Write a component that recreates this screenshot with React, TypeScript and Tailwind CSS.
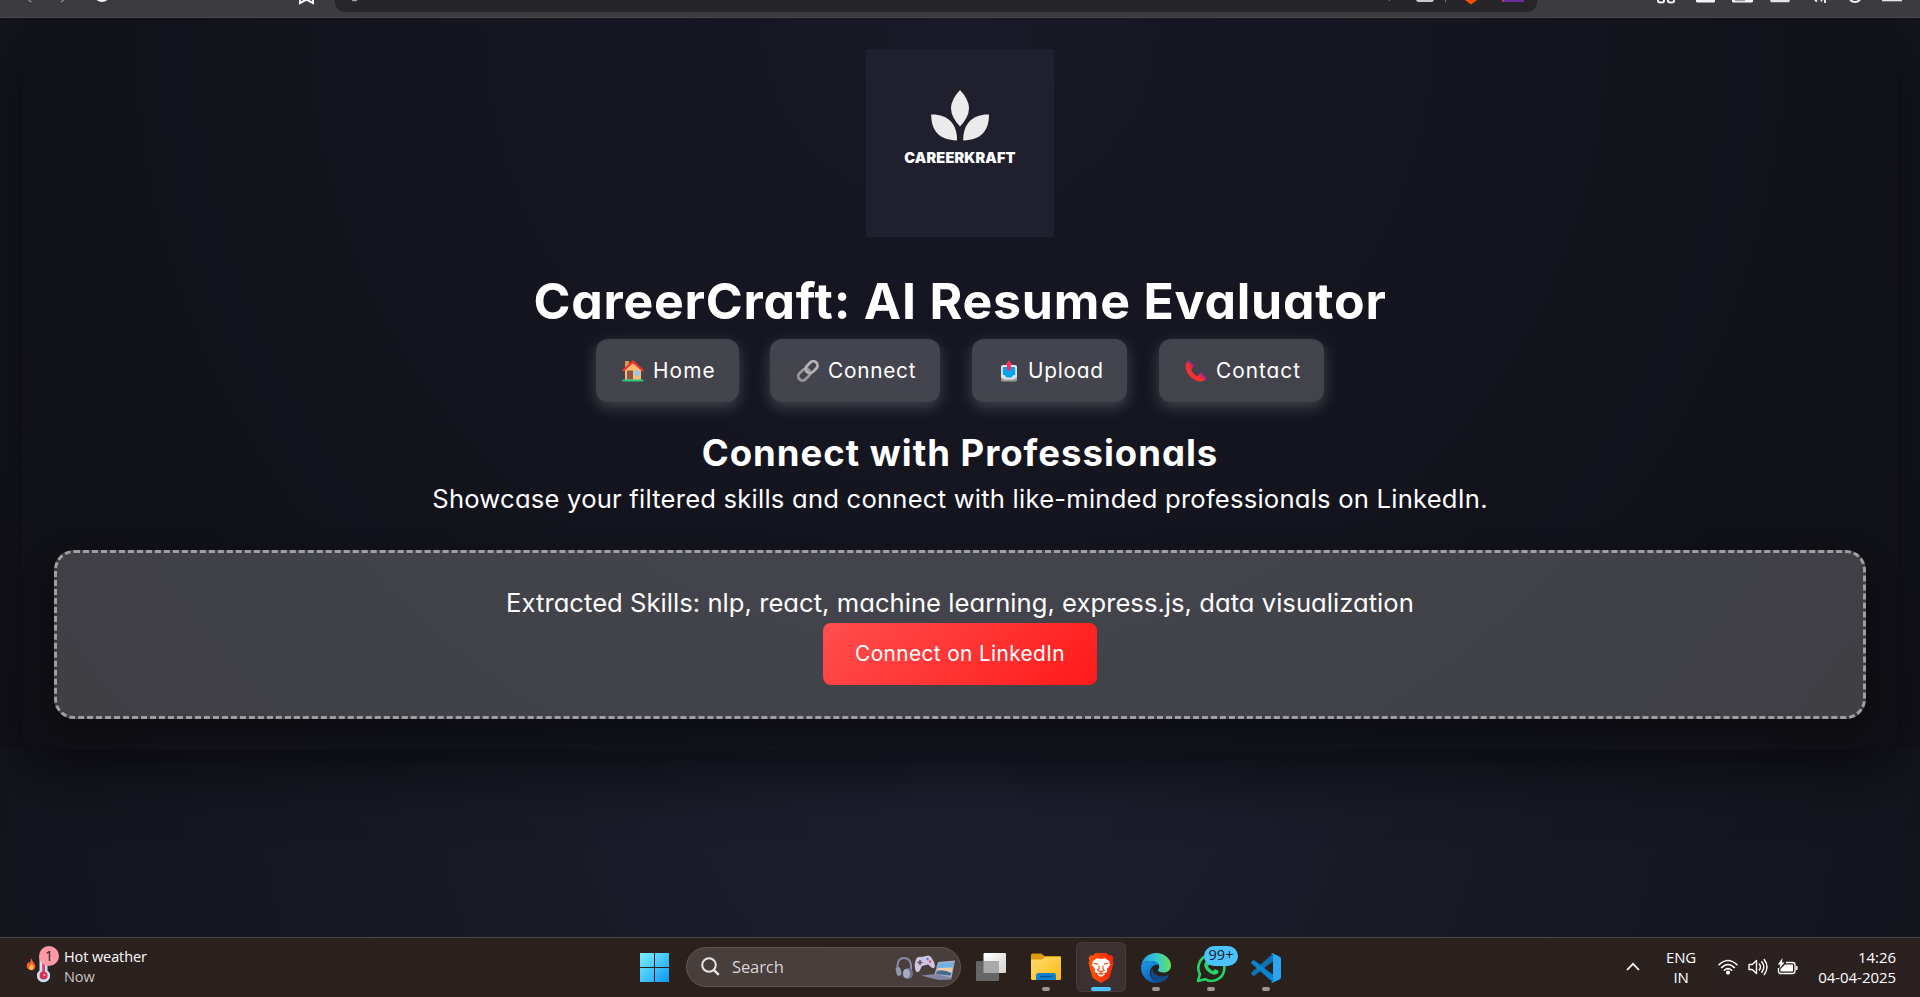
import React from "react";

const HomeIcon = () => (
  <svg width="22" height="22" viewBox="0 0 22 22">
    <path d="M3 1h4v7H3z" fill="#d99a52" />
    <path d="M3 9 11 3l8 6v11H3z" fill="#f3bd76" />
    <path d="M0.8 11 11 1.6 21.2 11" fill="none" stroke="#f8312f" strokeWidth="2.2" />
    <rect x="5" y="10.5" width="6" height="9" fill="#8d5744" />
    <rect x="12.6" y="10.8" width="4.8" height="4.6" fill="#83cbff" />
    <rect x="0.3" y="19.6" width="21.4" height="1.8" rx="0.9" fill="#26c97c" />
  </svg>
);

const LinkIcon = () => (
  <svg width="22" height="22" viewBox="0 0 22 22" fill="none" strokeWidth="2.8">
    <rect x="-6.6" y="-4.2" width="13.2" height="8.4" rx="4.2" transform="translate(7.2 14.6) rotate(-45)" stroke="#979797" />
    <rect x="-6.6" y="-4.2" width="13.2" height="8.4" rx="4.2" transform="translate(14.6 7.2) rotate(-45)" stroke="#b5b5b5" />
  </svg>
);

const OutboxIcon = () => (
  <svg width="18" height="22" viewBox="0 0 18 22">
    <path d="M1 17h16v3a1.5 1.5 0 0 1-1.5 1.5h-13A1.5 1.5 0 0 1 1 20z" fill="#9b9b9b" />
    <path d="M3 5h12a2 2 0 0 1 2 2v10.5l-4 2H5l-4-2V7a2 2 0 0 1 2-2z" fill="#e3e3e3" />
    <path d="M4 7h10q1.2 0 1.2 1.2V15h-1.600L11.500 17.400h-5L4.400 15H2.800V8.200q0-1.200 1.200-1.200z" fill="#00a6ed" />
    <path d="M9 0.300 12.600 5H11v5.500H7V5H5.400z" fill="#f92f60" />
  </svg>
);

const PhoneIcon = () => (
  <svg width="22" height="22" viewBox="0 0 22 22">
    <path d="M3.500 0.400 9 6 6.800 8.200 1.500 2.500z" fill="#c4237c" />
    <path d="M15.800 12.600 21.600 18.400 19.600 20.500 13.500 14.800z" fill="#c4237c" />
    <path d="M1.700 2 7.200 7.600 6 9.600q1.600 4.200 6.200 6.600l2-1.400 5.600 5.400q-2.300 1.800-5.800 1.300C6.500 20 0 12 0.600 5.200Q0.800 3.200 1.700 2z" fill="#f8312f" />
  </svg>
);

const NAV = [
  { label: "Home", icon: <HomeIcon />, box: "w-[143px] gap-[9px] pl-[26px]", text: "tracking-[1.1px]" },
  { label: "Connect", icon: <LinkIcon />, box: "-ml-px w-[170px] gap-[9px] pl-[27px]", text: "tracking-[0.75px]" },
  { label: "Upload", icon: <OutboxIcon />, box: "w-[155px] gap-[10px] pl-[28px]", text: "tracking-[0.75px]" },
  { label: "Contact", icon: <PhoneIcon />, box: "w-[165px] gap-[9px] pl-[26px]", text: "tracking-[1px]" },
];

const BrowserBar = () => (
  <header className="flex h-[18px] shrink-0 items-start border-b border-[#47464b] bg-[#3c3b3f]">
    <div className="flex w-[335px] shrink-0">
      <svg width="335" height="6" viewBox="0 0 335 6" fill="none">
        <path d="M28.500 0l3 2M64 0l-3 2" stroke="#88878b" strokeWidth="1.500" />
        <path d="M96.500 0q5.500 3.800 11 0z" fill="#f4f4f5" />
        <path d="M300 0v3l6.500-3.500L313 3V0" stroke="#f4f4f5" strokeWidth="2" />
      </svg>
    </div>
    <div className="flex h-[12px] w-[1202px] shrink-0 justify-between rounded-b-[10px] bg-[#26252a] pl-[16px] pr-[12px]">
      <svg width="8" height="3" viewBox="0 0 8 3"><path d="M0.500 0h6l-1 1.300h-4z" fill="#a3a2a6" /></svg>
      <svg width="140" height="6" viewBox="0 0 140 6">
        <path d="M4 0h1v1H4z" fill="#77767a" />
        <path d="M31 0h18l-1.500 2h-15z" fill="#c9c9cc" />
        <path d="M60 0h1v2h-1z" fill="#77767a" />
        <path d="M80 0h12l-6 4.500z" fill="#ff5000" />
        <path d="M117 0h22v2h-22z" fill="#6b2f9c" />
        <path d="M117 0h2v1.500h-2z" fill="#d93d52" />
      </svg>
    </div>
    <svg className="ml-[120px]" width="255" height="6" viewBox="0 0 255 6" fill="none">
      <path d="M1 0v1q0 1.500 3 1.500T7 1V0M11 0v1q0 1.500 3 1.500T17 1V0" stroke="#f4f4f5" strokeWidth="2" />
      <path d="M39 0h19v1.500L57 2.500H40l-1-1z" fill="#f4f4f5" />
      <path d="M75 0h21v1.500L95 2.500H76l-1-1z" fill="#f4f4f5" />
      <path d="M78 0h10v1.200H78z" fill="#9a999d" />
      <path d="M113 0h20l-1 2.200h-18z" fill="#e4e4e6" />
      <path d="M158 0l2 1.500M164.500 0v1.500M168 0v3" stroke="#f4f4f5" strokeWidth="1.800" />
      <path d="M193 0q5 4 10 0" stroke="#f4f4f5" strokeWidth="2" />
      <path d="M225 0h20v1.300h-20z" fill="#e4e4e6" />
    </svg>
  </header>
);

const Logo = () => (
  <div className="flex h-[188px] w-[188px] flex-col items-center bg-[#201f2e] pt-[41px]">
    <svg width="60" height="52" viewBox="0 0 60 52" fill="#ebebeb">
      <path d="M30 0Q39 9.500 39 18.300T30 36.500Q21 27 21 18.300T30 0z" />
      <path d="M1.200 24.600C16.500 24 27.400 33 27 50.400C9.500 50.500 1.200 41 1.200 24.600z" />
      <path d="M59 24.600C43.700 24 33 33 33.200 50.400C50.700 50.500 59 41 59 24.600z" />
    </svg>
    <div className="mt-[6px] h-[20px] whitespace-nowrap text-[14.5px] font-black leading-[20px] tracking-[0.15px] text-white">CAREERKRAFT</div>
  </div>
);

const Indicator = ({ active = false }: { active?: boolean }) => (
  <div className={active ? "h-[4px] w-[20px] rounded-full bg-[#4cc2ff]" : "h-[4px] w-[8px] rounded-full bg-[#9e9695]"} />
);

const WindowsIcon = () => (
  <svg className="mt-[2px]" width="29" height="29" viewBox="0 0 29 29">
    <defs>
      <linearGradient id="win" x1="0" y1="0" x2="1" y2="1" gradientUnits="objectBoundingBox">
        <stop offset="0" stopColor="#7defff" /><stop offset="0.500" stopColor="#45c5fb" /><stop offset="1" stopColor="#0d96f8" />
      </linearGradient>
    </defs>
    <path d="M0 0h14v14H0zM15 0h14v14H15zM0 15h14v14H0zM15 15h14v14H15z" fill="url(#win)" />
  </svg>
);

const SearchArt = () => (
  <svg className="mt-[2px]" width="60" height="28" viewBox="0 0 60 28" fill="none">
    <path d="M2.500 17V11Q3 4 9 4q6 0 7 7v5" stroke="#8d8ba3" strokeWidth="2" />
    <rect x="1" y="13" width="5" height="9" rx="2.500" fill="#9296ac" transform="rotate(-12 3 17)" />
    <ellipse cx="13" cy="19.500" rx="5" ry="5.500" fill="#6f7089" />
    <ellipse cx="11.500" cy="19.500" rx="3.500" ry="4.500" fill="#a7abc0" />
    <path d="M22 3.500q3-1 5-.5l4-1q3-1.500 5 1 3.500 4.500 4 9-.5 3.500-3.500 1.500L33 10.500l-6 1.500-2.500 5q-2.500 2.500-4-.5Q18.500 9 22 3.500z" fill="#cfc3df" />
    <path d="M22.500 8.500h5M25 6v5" stroke="#565269" strokeWidth="1.600" />
    <circle cx="32.500" cy="5" r="1.200" fill="#5a7fd0" /><circle cx="35" cy="7.500" r="1.200" fill="#c85b70" />
    <path d="M43 8l17-1.500L56.500 24 39 22z" fill="#a9aec6" />
    <path d="M44.500 9.500l14-1-3 13-14.500-1.500z" fill="#68b3e8" />
    <path d="M43.200 14l14.300-.5-1 5-14.500-1z" fill="#f2c9a8" />
    <path d="M42 17q7-2 14 2l-.5 2.500L41 20z" fill="#43698b" />
    <path d="M26 21.500l14-1.500 16.500 3.500-.5 2-12 .5z" fill="#8288a4" />
  </svg>
);

const TaskViewIcon = () => (
  <svg width="30" height="28" viewBox="0 0 30 28">
    <defs><linearGradient id="tv" x1="0" y1="0" x2="1" y2="1"><stop offset="0" stopColor="#fff" /><stop offset="1" stopColor="#d2d2d2" /></linearGradient></defs>
    <rect x="7.500" y="0" width="22.500" height="20" rx="1" fill="url(#tv)" />
    <rect x="0" y="8" width="23" height="20" rx="1" fill="#666" />
    <path d="M7.500 8H23v12H7.500z" fill="#a9a9a9" />
  </svg>
);

const FolderIcon = () => (
  <svg width="30" height="28" viewBox="0 0 30 28">
    <defs><linearGradient id="fo" x1="0" y1="0" x2="1" y2="1"><stop offset="0" stopColor="#ffdc6e" /><stop offset="1" stopColor="#fcb915" /></linearGradient></defs>
    <path d="M0 2q0-1.500 1.500-1.500h8q1 0 2 1L13.500 3H29q1 0 1 1v8H0z" fill="#dc9a08" />
    <path d="M0 6.500h10.500L14 4h14.500Q30 4 30 5.500v20q0 1.500-1.500 1.500h-27Q0 27 0 25.500z" fill="url(#fo)" />
    <path d="M5 27v-4.500Q5 20 7.500 20h15q2.500 0 2.500 2.500V27z" fill="#1080d0" />
    <path d="M9 23.500h12.500" stroke="#084f92" strokeWidth="1.200" />
  </svg>
);

const BraveIcon = () => (
  <svg width="26" height="30" viewBox="0 0 26 30">
    <defs><linearGradient id="br" x1="0" y1="0" x2="1" y2="0"><stop offset="0" stopColor="#ff5601" /><stop offset="1" stopColor="#f9240e" /></linearGradient></defs>
    <path d="M7.500 0h11L21 2.500l2.500-.3L25.600 5l-1 2.500 1 2.500-3.800 13.500q-.5 1.500-2 2.500L13 30l-6.800-4q-1.500-1-2-2.500L0.400 10l1-2.500-1-2.500 2.100-2.800 2.500.3z" fill="url(#br)" />
    <path d="M9 5.200l4 .8 4-.8 4.500 3-.3 2 1.300 1.300-3.500 4.500.2 3-3.200 1.500.8 1L13 24l-3.800-2.500.8-1-3.200-1.500.2-3-3.500-4.500 1.300-1.300-.3-2z" fill="#fff" />
    <path d="M5.800 10.200l4.200.9M20.200 10.200l-4.200.9M10.800 12.500l.4 2.500-1.500 2.200 3.300 1.600 3.300-1.600-1.500-2.200.4-2.500" fill="none" stroke="#fb4210" strokeWidth="1.100" />
    <path d="M10 20.500l3-1 3 1-3 1.500z" fill="#fb4210" />
  </svg>
);

const EdgeIcon = () => (
  <svg width="30" height="30" viewBox="0 0 30 30">
    <defs>
      <linearGradient id="e1" x1="0" y1="0.500" x2="1" y2="0.400"><stop offset="0" stopColor="#1f9be8" /><stop offset="0.500" stopColor="#33c5d8" /><stop offset="1" stopColor="#67e651" /></linearGradient>
      <linearGradient id="e2" x1="0" y1="0" x2="0.600" y2="1"><stop offset="0" stopColor="#1aa0ea" /><stop offset="1" stopColor="#0c5cb8" /></linearGradient>
    </defs>
    <path d="M0.200 13C1.500 5 7.500 0 15 0c8.500 0 15 6 15 12.500 0 4.500-3.500 7-7.500 7-3.500 0-5.500-1.200-5.500-2.200 0-.8 1.200-1.500 1.200-3.500C18.200 10.500 14.500 8 10 8 5 8 1.500 10 0.200 13z" fill="url(#e1)" />
    <path d="M0.200 13C2 9.500 6 8 10 8c4 0 7 2 7.800 4.200-3.800-2-8.800 1.800-8.800 7.300 0 5 3.500 9 8.500 10.300Q16 30 15 30C6 30-.8 22.500.2 13z" fill="url(#e2)" />
    <path d="M11.500 15.500c-3 4.500-1 13 6 14.300 4-.5 8-3 10-6.600.3-.7-.2-1.200-.8-.9-6 2.700-14.700.7-15.200-6.800z" fill="#114a8b" />
  </svg>
);

const WhatsAppIcon = () => (
  <svg width="30" height="30" viewBox="0 0 30 30" fill="none">
    <path d="M2 28l1.900-7A13 13 0 1 1 9 26.200z" stroke="#25d366" strokeWidth="2.600" strokeLinejoin="round" />
    <path d="M9.700 8.500c1-1 2-.9 2.400 0l1.100 2.600c.2.800-.9 1.700-1.200 2.100.9 2 2.900 3.900 5.200 4.700.6-.4 1.400-1.900 2.200-1.600l2.700 1.300c.9.500.5 2.300-.4 3-1.400 1.200-3.300 1.300-5.300.6-3.800-1.400-6.200-3.800-7.700-7-.9-2.100-.6-4.200 1-5.700z" fill="#25d366" />
  </svg>
);

const CodeIcon = () => (
  <svg width="30" height="30" viewBox="0 0 30 30">
    <path d="M22 0.500v7.700L3.500 22.500q-.8.600-1.600 0L0.500 21.200q-.8-.8 0-1.600z" fill="#0f73b8" />
    <path d="M22 29.500v-7.700L3.500 7.500q-.8-.6-1.600 0L0.500 8.800q-.8.800 0 1.600z" fill="#0785ce" />
    <path d="M21.500 0.200l7 3.400Q30 4.400 30 6v18q0 1.600-1.500 2.400l-7 3.400q-1 .3-1.500-.5 2 .2 2-1.500V2.200Q22 .5 20 .7q.5-.8 1.500-.5z" fill="#2aa5f5" />
  </svg>
);

const apps = [
  { name: "view", icon: <TaskViewIcon />, running: false, active: false },
  { name: "files", icon: <FolderIcon />, running: true, active: false },
  { name: "brave", icon: <BraveIcon />, running: true, active: true },
  { name: "edge", icon: <EdgeIcon />, running: true, active: false },
  { name: "whatsapp", icon: <WhatsAppIcon />, running: true, active: false, badge: "99+" },
  { name: "code", icon: <CodeIcon />, running: true, active: false },
];

const Taskbar = () => (
  <footer className="flex h-[60px] shrink-0 items-center border-t border-[#4d4645] bg-linear-to-r from-[#2b211f] via-[#2a211c] to-[#2b2120] pb-[2px] font-['Open_Sans',sans-serif] text-white">
    <div className="flex w-[640px] shrink-0 items-center">
      <div className="relative ml-[26px] h-[38px] w-[38px]">
        <svg width="34" height="38" viewBox="0 0 34 38">
          <g transform="translate(0 -4)">
            <path d="M5 14q1 2.500 3 5 3 4-.5 7-4 1-6-1.500-2-3.500 1-6.500l1 1Q5 17 5 14z" fill="#f4622e" />
            <path d="M5.500 20q3 3 1 5.500-3 1-3.500-1.500Q4 22 5.500 20z" fill="#ffc452" />
          </g>
          <path d="M13.500 9h8v13.500a6.600 6.600 0 1 1-8 0z" fill="#c9e2f8" />
          <path d="M16.200 10h2.800v15h-2.800z" fill="#e5405a" />
          <circle cx="17.600" cy="27.500" r="4" fill="#d62d50" /><circle cx="18.300" cy="27" r="1.200" fill="#ff9aa8" />
        </svg>
        <div className="absolute left-[13px] top-[-2px] flex h-[20px] w-[20px] items-center justify-center rounded-full bg-[#ff99a4] text-[14px] leading-none text-[#20191a]">1</div>
      </div>
      <div className="flex flex-col text-[14.5px] leading-[20px]">
        <span className="tracking-[-0.1px]">Hot weather</span>
        <span className="tracking-[-0.1px] text-[#c9c5c4]">Now</span>
      </div>
    </div>
    <WindowsIcon />
    <div className="ml-[17px] flex h-[40px] w-[275px] shrink-0 items-center rounded-full border border-[#5f5654] bg-[#483e3c] pl-[14px]">
      <svg width="19" height="19" viewBox="0 0 19 19" fill="none" stroke="#e8e6e5" strokeWidth="2">
        <circle cx="8" cy="8" r="6.800" /><path d="M12.800 12.800l5 5" strokeWidth="2.400" />
      </svg>
      <span className="ml-[12px] w-[163px] shrink-0 pt-[2px] text-[16.5px] tracking-[-0.1px] text-[#d8d4d3]">Search</span>
      <SearchArt />
    </div>
    <div className="ml-[5px] flex items-center gap-[5px]">
      {apps.map((app) => (
        <div
          key={app.name}
          className={
            app.active
              ? "relative flex h-[50px] w-[50px] flex-col items-center justify-between rounded-[6px] bg-[#3a3130] pt-[11px] pb-px ring-1 ring-inset ring-[#453c3b]"
              : "relative flex h-[50px] w-[50px] flex-col items-center justify-between pt-[11px] pb-px"
          }
        >
          {app.icon}
          {app.running && <Indicator active={app.active} />}
          {app.badge && (
            <div className="absolute left-[18px] top-[4px] flex h-[20px] w-[34px] items-center justify-center rounded-full bg-[#4cc2ff] text-[14.5px] leading-none text-[#161a1c]">{app.badge}</div>
          )}
        </div>
      ))}
    </div>
    <div className="ml-auto flex items-center pr-[24px]">
      <svg width="14" height="9" viewBox="0 0 14 9" fill="none" stroke="#fff" strokeWidth="1.700"><path d="M1 8l6-6.200L13 8" /></svg>
      <div className="ml-[26px] w-[30px] text-center text-[15px] leading-[20px] tracking-[-0.2px]">
        <div>ENG</div>
        <div>IN</div>
      </div>
      <svg className="ml-[22px]" width="20" height="16" viewBox="0 0 20 16" fill="none" stroke="#fff" strokeWidth="1.500" strokeLinecap="round">
        <path d="M1 5.800Q10-2.800 19 5.800M3.600 8.600Q10 2.500 16.400 8.600M6.300 11.300Q10 8 13.700 11.300" /><circle cx="10" cy="13.600" r="1.300" fill="#fff" />
      </svg>
      <svg className="ml-[10px]" width="20" height="18" viewBox="0 0 20 18" fill="none" stroke="#fff" strokeWidth="1.400" strokeLinejoin="round" strokeLinecap="round">
        <path d="M1 6.500h3.200L8.500 2.500v13L4.200 11.500H1zM11.300 6q2.300 3 0 6M13.800 3.800q4 5.200 0 10.400M16.200 1.500q5.600 7.500 0 15" />
      </svg>
      <svg className="ml-[9px]" width="21" height="18" viewBox="0 0 21 18" fill="none">
        <path d="M9 4.500h6.500q2.500 0 2.500 2.500v6q0 2.500-2.500 2.500h-12Q1.500 15.500 1.500 13V10" stroke="#fff" strokeWidth="1.300" />
        <path d="M8 6.500h8v7H3.500v-2.500z" fill="#fff" /><path d="M19 8h1.500v4H19z" fill="#fff" />
        <path d="M5.500 0L0.800 6.500h2.500L2.500 10.500 7.500 4.500H5z" fill="#fff" />
      </svg>
      <div className="ml-[18px] w-[80px] whitespace-nowrap text-right text-[15px] leading-[20px] tracking-[-0.05px]">
        <div>14:26</div>
        <div>04-04-2025</div>
      </div>
    </div>
  </footer>
);

export default function App() {
  return (
    <div className="flex h-[997px] w-[1920px] flex-col overflow-hidden bg-[#14141c] font-['Inter',sans-serif] text-white [font-feature-settings:'cv11']">
      <BrowserBar />
      <div className="flex min-h-0 flex-1 flex-col overflow-hidden bg-[radial-gradient(circle_at_50%_0%,#1e1e2e,#12121a)] bg-[length:1920px_732px]">
        <main className="mx-[22px] flex h-[732px] shrink-0 flex-col items-center rounded-[20px] bg-black/15 px-[32px] pt-[31px] shadow-[0_20px_60px_rgba(0,0,0,0.55)]">
          <Logo />
          <h1 className="mt-[26px] h-[76px] whitespace-nowrap text-[50px] font-bold leading-[76px] tracking-[0.8px]">CareerCraft: AI Resume Evaluator</h1>
          <nav className="flex gap-[32px]">
            {NAV.map((item) => (
              <a key={item.label} className={`flex h-[63px] items-center rounded-[12px] bg-white/20 shadow-[0_5px_15px_rgba(255,255,255,0.2)] ${item.box}`}>
                {item.icon}
                <span className={`text-[20.8px] leading-[30px] ${item.text}`}>{item.label}</span>
              </a>
            ))}
          </nav>
          <h2 className="mt-[24px] h-[54px] whitespace-nowrap text-[36.5px] font-bold leading-[54px] tracking-[1px]">Connect with Professionals</h2>
          <p className="h-[38px] whitespace-nowrap text-[25.6px] leading-[38px] tracking-[0.22px]">Showcase your filtered skills and connect with like-minded professionals on LinkedIn.</p>
          <section className="mt-[32px] flex h-[169px] w-[1812px] flex-col items-center rounded-[20px] border-[3px] border-dashed border-white/50 bg-white/20 pt-[31px] shadow-[0_10px_30px_rgba(0,0,0,0.4)]">
            <p className="mb-px h-[38px] whitespace-nowrap text-[25.6px] leading-[38px] tracking-[0.03px]">Extracted Skills: nlp, react, machine learning, express.js, data visualization</p>
            <button className="h-[62px] w-[274px] rounded-[8px] bg-[linear-gradient(135deg,#ff4e4e,#ff1a1a)] text-[20.8px] tracking-[0.4px]">Connect on LinkedIn</button>
          </section>
        </main>
      </div>
      <Taskbar />
    </div>
  );
}
